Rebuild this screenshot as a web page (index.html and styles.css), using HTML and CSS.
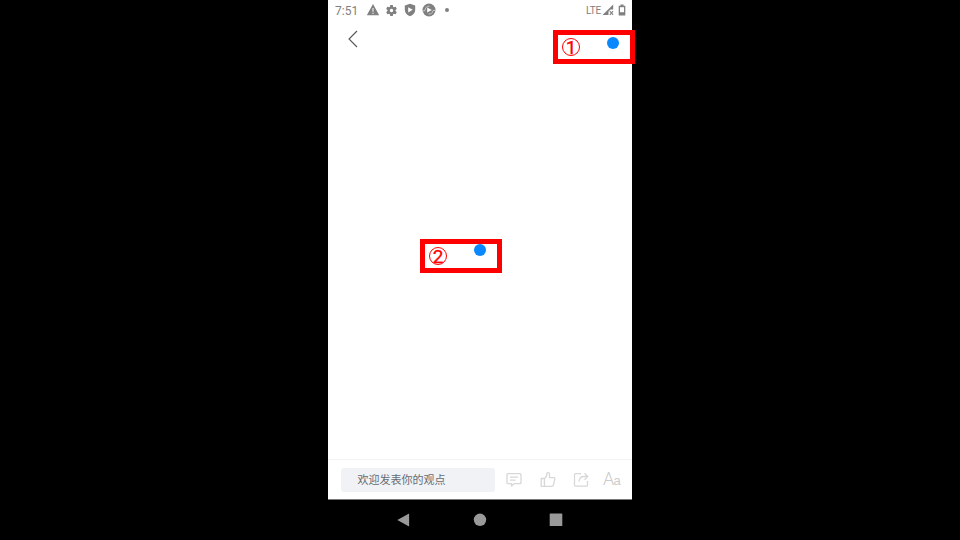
FILE: index.html
```html
<!DOCTYPE html>
<html lang="zh-CN">
<head>
<meta charset="utf-8">
<title>文章</title>
<link rel="stylesheet" href="styles.css">
</head>
<body>
<div class="phone">
  <header class="status">
    <span class="time">7:51</span>
    <svg class="status-icon warning" viewBox="0 0 14 14"><path d="M7 1 13.200 12.300H.8z" fill="#808080"/><path d="M7 5v3.700M7 9.700v1.400" stroke="#e8e8e8" stroke-width="1.200"/></svg>
    <svg class="status-icon gear" viewBox="0 0 24 24"><path fill="#808080" fill-rule="evenodd" d="M19.43 12.98c.04-.32.07-.64.07-.98s-.03-.66-.07-.98l2.11-1.65c.19-.15.24-.42.12-.64l-2-3.46c-.12-.22-.39-.3-.61-.22l-2.49 1c-.52-.4-1.08-.73-1.69-.98l-.38-2.65C14.46 2.18 14.25 2 14 2h-4c-.25 0-.46.18-.49.42l-.38 2.65c-.61.25-1.17.59-1.69.98l-2.49-1c-.23-.09-.49 0-.61.22l-2 3.46c-.13.22-.07.49.12.64l2.11 1.65c-.04.32-.07.65-.07.98s.03.66.07.98l-2.11 1.65c-.19.15-.24.42-.12.64l2 3.46c.12.22.39.3.61.22l2.49-1c.52.4 1.08.73 1.69.98l.38 2.65c.03.24.24.42.49.42h4c.25 0 .46-.18.49-.42l.38-2.65c.61-.25 1.17-.59 1.69-.98l2.49 1c.23.09.49 0 .61-.22l2-3.46c.12-.22.07-.49-.12-.64zM12 15.200a3.200 3.200 0 1 1 0-6.400 3.200 3.200 0 0 1 0 6.400z"/></svg>
    <svg class="status-icon shield" viewBox="0 0 14 14"><path d="M7 .8 12.200 2.600V7c0 3-2.200 5-5.200 6.200C4 12 1.800 10 1.800 7V2.600z" fill="#808080"/><path d="M5.200 4.200v5.200L9.700 6.800z" fill="#fff"/></svg>
    <svg class="status-icon sync" viewBox="0 0 14 14"><circle cx="7" cy="7" r="6.500" fill="#808080"/><path d="M.3 8.200 3 7.600A4.200 4.200 0 0 1 7.500 3.200M13.700 7.200 11 7.600A4.200 4.200 0 0 1 6.500 11" fill="none" stroke="#d8d8d8" stroke-width=".8"/><path d="M5.200 4.400v5.200l4.600-2.600z" fill="#fff"/></svg>
    <span class="dot"></span>
    <span class="network">LTE</span>
    <svg class="signal" viewBox="0 0 12 12"><path d="M.5 11 11.200.5V5.500H8.500L6.500 7.500V11z" fill="#808080"/><path d="m7.800 7.200 3.300 3.600M11.100 7.200l-3.300 3.600" stroke="#808080" stroke-width="1.100"/></svg>
    <svg class="battery" viewBox="0 0 8 12"><path d="M2.500.5h3v1.300h1.800v9.700H.7V1.800h1.800z" fill="#808080"/><path d="M2 3.200h4v5H2z" fill="#fff"/></svg>
  </header>
  <nav class="topbar">
    <svg class="back" viewBox="0 0 12 18"><path d="M10 1 2 9l8 8" fill="none" stroke="#555" stroke-width="1.100"/></svg>
  </nav>
  <main class="content"></main>
  <footer class="comment-bar">
    <div class="comment-input">欢迎发表你的观点</div>
    <svg class="action comments" viewBox="0 0 18 18"><path d="M3 2.700h12q1 0 1 1v8q0 1-1 1H9L6.500 15v-2.300H3q-1 0-1-1v-8q0-1 1-1zM5 6.200h8M5 9.200h5.500"/></svg>
    <svg class="action like" viewBox="0 0 18 18"><path d="M2.200 7.500h3.200v7.800H2.200zM5.400 7.500c2-1 2.500-3 2.600-5.300.1-1.200 2.500-1 2.500 1.100v3.400H15c.7 0 1 .6.800 1.300l-1.500 6.300c-.2.700-.6 1-1.200 1H5.400"/></svg>
    <svg class="action share" viewBox="0 0 18 18"><path d="M9 2.700H3.500q-1 0-1 1v10.500q0 1 1 1h11q1 0 1-1V10M7 10.500c.3-3 2.300-5 5-5h3.500M12.500 2.200l3.300 3.300-3.300 3.300"/></svg>
    <span class="font-size"><span class="cap">A</span>a</span>
  </footer>
  <div class="system-nav">
    <svg viewBox="0 0 14 14"><path d="M12.100.5v13L.3 7z"/></svg>
    <svg viewBox="0 0 14 14"><circle cx="7" cy="6.800" r="6.200"/></svg>
    <svg viewBox="0 0 14 14"><rect x=".7" y=".5" width="12.600" height="12.600" rx=".6"/></svg>
  </div>
  <div class="callout callout-one"><span class="number">1</span><span class="marker"></span></div>
  <div class="callout callout-two"><span class="number">2</span><span class="marker"></span></div>
</div>
</body>
</html>
```
FILE: styles.css
```css
* { box-sizing: border-box; }
body {
  margin: 0;
  height: 540px;
  background: #000;
  display: flex;
  justify-content: center;
  font-family: Roboto, "Noto Sans CJK SC", sans-serif;
}
svg { display: block; flex: none; }
.phone {
  position: relative;
  width: 304px;
  height: 540px;
  background: #fff;
  display: flex;
  flex-direction: column;
}
.status {
  height: 20px;
  display: flex;
  align-items: center;
  padding: 0 6px 0 7px;
  color: #808080;
}
.time { width: 31px; font-size: 12px; line-height: 20px; padding-top: 1px; }
.status-icon { width: 14px; height: 14px; }
.gear { width: 13px; height: 13px; margin-left: 5px; }
.shield { margin-left: 5px; }
.sync { margin-left: 4.5px; }
.dot { width: 4px; height: 4px; border-radius: 50%; background: #808080; margin-left: 9.5px; }
.network { margin-left: auto; font-size: 10px; letter-spacing: -.2px; }
.signal { width: 12px; height: 12px; margin-left: 1px; }
.battery { width: 8px; height: 12px; margin-left: 4px; }
.topbar { height: 38px; padding: 10px 19px; }
.back { width: 12px; height: 18px; }
.content { flex: 1; }
.comment-bar {
  height: 41px;
  display: flex;
  align-items: center;
  border-top: 1px solid #f4f4f4;
  border-bottom: 1px solid #777;
  padding: 0 12px 0 13px;
}
.comment-input {
  flex: none;
  width: 153.5px;
  height: 24px;
  border-radius: 3px;
  background: #f0f2f5;
  color: #666c73;
  font-size: 11px;
  line-height: 26px;
  padding-left: 16.5px;
}
.action { width: 18px; height: 18px; fill: none; stroke: #d8d8d8; stroke-width: 1.3; stroke-linejoin: round; }
.comments { margin-left: 10.5px; }
.like { margin-left: 16px; }
.share { margin-left: 15px; }
.font-size { margin-left: 13px; color: #ccc; font: 300 13px/20px "Liberation Sans", sans-serif; white-space: nowrap; letter-spacing: -.8px; }
.cap { font: 300 18px/20px Roboto, sans-serif; }
.system-nav {
  height: 40px;
  background: #000;
  display: flex;
  justify-content: center;
  align-items: center;
  gap: 62px;
}
.system-nav svg { width: 14px; height: 14px; fill: #999; }
.callout {
  position: absolute;
  width: 82px;
  height: 34px;
  border: 5px solid #f00;
  display: flex;
  padding-left: 4px;
}
.callout-one { left: 225px; top: 30px; }
.callout-two { left: 92px; top: 239px; }
.number {
  width: 18px;
  height: 18px;
  margin-top: 3px;
  border: 1px solid #f00;
  border-radius: 50%;
  color: #f00;
  font: 19px/17px Roboto, sans-serif;
  text-align: center;
  -webkit-text-stroke: .3px #f00;
}
.marker { width: 12px; height: 12px; border-radius: 50%; background: #0a88ff; margin: 2px 0 0 26.5px; }
.callout-two .marker { margin-top: 0; }
```
